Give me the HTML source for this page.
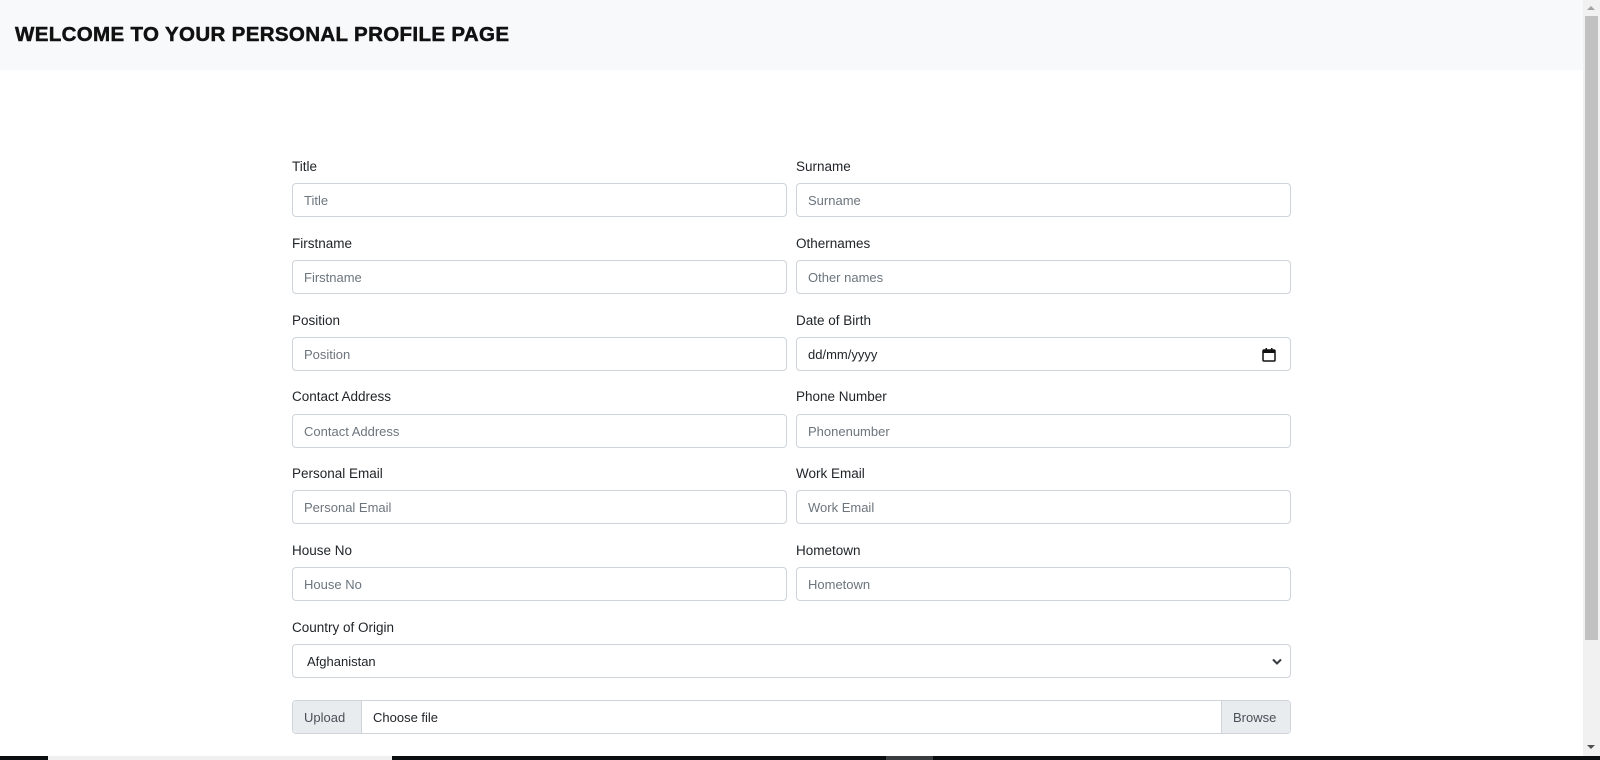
<!DOCTYPE html>
<html><head><style>
*{box-sizing:border-box;margin:0;padding:0}
body{width:1600px;height:760px;overflow:hidden;background:#fff;font-family:"Liberation Sans",sans-serif;color:#212529;position:relative}
.hdr{position:absolute;left:0;top:0;width:1583px;height:70px;background:#f8f9fa}
.hdr h1{position:absolute;left:15px;top:23px;font-size:20.5px;font-weight:900;letter-spacing:0.35px;color:#111;-webkit-text-stroke:0.5px #111}
.sb{position:absolute;left:1583px;top:0;width:17px;height:756px;background:#f1f1f1}
.th{position:absolute;left:1585px;top:16px;width:13px;height:624px;background:#c1c1c1}
.up{position:absolute;left:1587px;top:6px;width:0;height:0;border-left:4px solid transparent;border-right:4px solid transparent;border-bottom:4px solid #a3a3a3}
.dn{position:absolute;left:1587px;top:745px;width:0;height:0;border-left:4px solid transparent;border-right:4px solid transparent;border-top:4px solid #505050}
.lbl{position:absolute;font-size:13.5px;color:#212529}
.in{position:absolute;height:34px;border:1px solid #ced4da;border-radius:4px;background:#fff;font-size:13px;color:#6c757d;padding:10px 11px;line-height:14px}
.bot{position:absolute;left:0;top:756px;width:1600px;height:4px;background:#0b0d10}
</style></head><body>
<div class="hdr"><h1>WELCOME TO YOUR PERSONAL PROFILE PAGE</h1></div>
<div class="sb"></div><div class="th"></div><div class="up"></div><div class="dn"></div>

<div class="lbl" style="left:292px;top:159px">Title</div><div class="lbl" style="left:796px;top:159px">Surname</div>
<div class="in" style="left:292px;top:183px;width:495px">Title</div><div class="in" style="left:796px;top:183px;width:495px">Surname</div>

<div class="lbl" style="left:292px;top:236px">Firstname</div><div class="lbl" style="left:796px;top:236px">Othernames</div>
<div class="in" style="left:292px;top:260px;width:495px">Firstname</div><div class="in" style="left:796px;top:260px;width:495px">Other names</div>

<div class="lbl" style="left:292px;top:313px">Position</div><div class="lbl" style="left:796px;top:313px">Date of Birth</div>
<div class="in" style="left:292px;top:337px;width:495px">Position</div>
<div class="in" style="left:796px;top:337px;width:495px;color:#212529">dd/mm/yyyy
<svg style="position:absolute;right:14px;top:10px" width="14" height="14" viewBox="0 0 14 14"><rect x="1" y="2" width="12" height="11" rx="1" fill="none" stroke="#111" stroke-width="1.5"/><rect x="1" y="2" width="12" height="3" fill="#111"/><rect x="3.5" y="0" width="1.5" height="3" fill="#111"/><rect x="9" y="0" width="1.5" height="3" fill="#111"/></svg></div>

<div class="lbl" style="left:292px;top:389px">Contact Address</div><div class="lbl" style="left:796px;top:389px">Phone Number</div>
<div class="in" style="left:292px;top:414px;width:495px">Contact Address</div><div class="in" style="left:796px;top:414px;width:495px">Phonenumber</div>

<div class="lbl" style="left:292px;top:466px">Personal Email</div><div class="lbl" style="left:796px;top:466px">Work Email</div>
<div class="in" style="left:292px;top:490px;width:495px">Personal Email</div><div class="in" style="left:796px;top:490px;width:495px">Work Email</div>

<div class="lbl" style="left:292px;top:543px">House No</div><div class="lbl" style="left:796px;top:543px">Hometown</div>
<div class="in" style="left:292px;top:567px;width:495px">House No</div><div class="in" style="left:796px;top:567px;width:495px">Hometown</div>

<div class="lbl" style="left:292px;top:620px">Country of Origin</div>
<div class="in" style="left:292px;top:644px;width:999px;color:#212529;padding-left:14px">Afghanistan
<svg style="position:absolute;right:8px;top:13px" width="10" height="8" viewBox="0 0 10 8"><path d="M1 1.5L5 5.5L9 1.5" fill="none" stroke="#343a40" stroke-width="2"/></svg></div>

<div class="in" style="left:292px;top:700px;width:999px;color:#495057;padding:0">
<div style="position:absolute;left:0;top:0;width:69px;height:32px;background:#e9ecef;border-right:1px solid #ced4da;padding:10px 11px;border-radius:4px 0 0 4px">Upload</div>
<div style="position:absolute;left:80px;top:10px;color:#212529">Choose file</div>
<div style="position:absolute;right:0;top:0;width:69px;height:32px;background:#e9ecef;border-left:1px solid #ced4da;padding:10px 11px;border-radius:0 4px 4px 0">Browse</div>
</div>

<div class="bot"></div>
<div style="position:absolute;left:48px;top:756px;width:344px;height:4px;background:#f0f0f0"></div>
<div style="position:absolute;left:886px;top:756px;width:47px;height:4px;background:#3a3d40"></div>
</body></html>
